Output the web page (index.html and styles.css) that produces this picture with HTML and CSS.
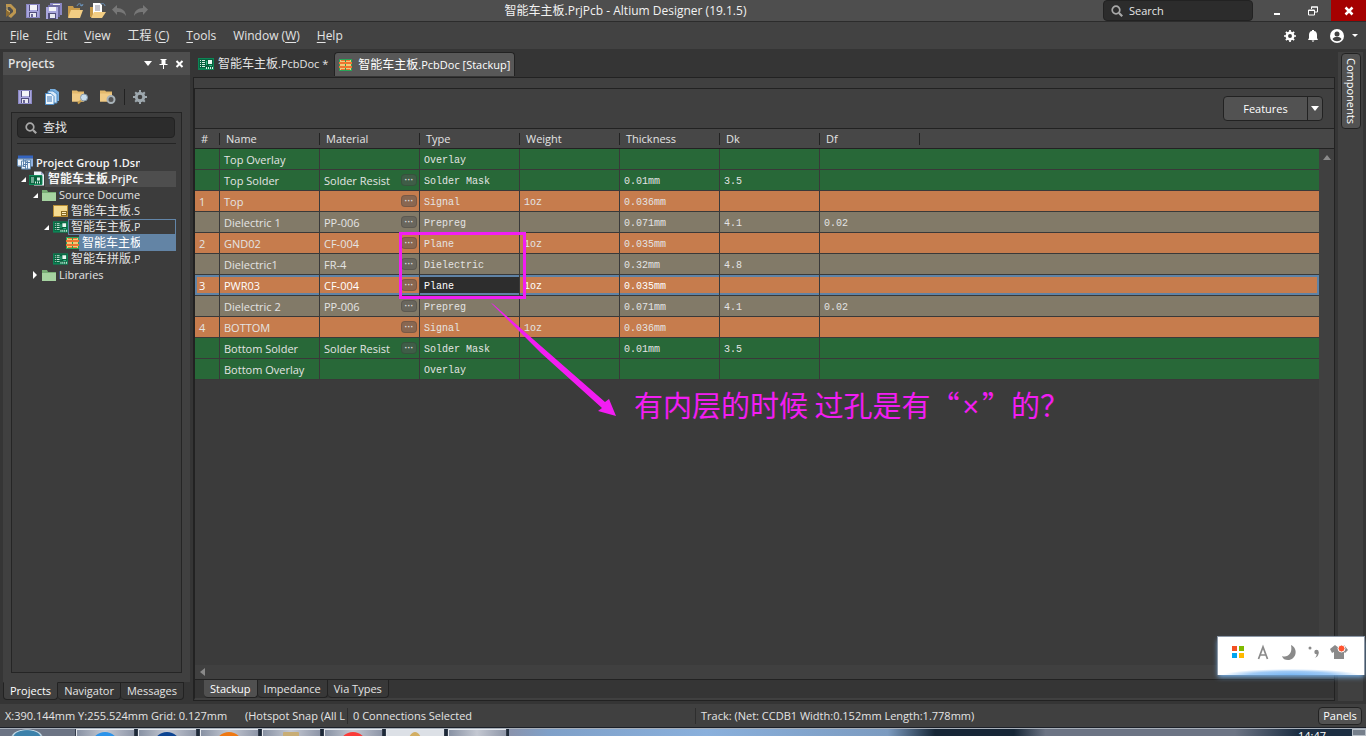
FILE: index.html
```html
<!DOCTYPE html>
<html lang="zh-CN">
<head>
<meta charset="utf-8">
<title>智能车主板.PrjPcb - Altium Designer (19.1.5)</title>
<link rel="stylesheet" href="styles.css">
</head>
<body>
<svg class="defs" width="0" height="0" aria-hidden="true">
  <symbol id="i-save" viewBox="0 0 14 14"><path d="M0 0h14v14H0z" fill="#8b88c4"/><path d="M1 1h12v12H1z" fill="#a9a6dc"/><path d="M3 1h8v5H3z" fill="#f4f4f8"/><path d="M3 1h1v6H3zM11 1h1v6h-1z" fill="#514e7c"/><path d="M3 8h8v5H3z" fill="#514e7c"/><path d="M4 9h6v4H4z" fill="#e8e8f0"/><path d="M5 10h2v3H5z" fill="#6a6796"/></symbol>
  <symbol id="i-saveall" viewBox="0 0 16 16"><path d="M4 0h12v12H4z" fill="#8b88c4"/><path d="M7 1h7v3H7z" fill="#eee"/><path d="M2 2h12v12H2z" fill="#6c69a0"/><path d="M0 4h12v12H0z" fill="#a9a6dc"/><path d="M3 4h7v4H3z" fill="#f4f4f8"/><path d="M2 10h8v6H2z" fill="#514e7c"/><path d="M4 11h5v4H4z" fill="#e8e8f0"/></symbol>
  <symbol id="i-open" viewBox="0 0 16 16"><path d="M0 3h5l1 2h6v9H0z" fill="#c89b4a"/><path d="M3 7h12l-3 8H0z" fill="#f2cd83"/><path d="M9 3c1-3 4-3 5 0m0 0l1-2m-1 2l-2-1" fill="none" stroke="#6c95bd"/></symbol>
  <symbol id="i-opendoc" viewBox="0 0 16 16"><path d="M0 4h11v10H0z" fill="#c89b4a"/><path d="M3 0h7l2 2v9H3z" fill="#fff"/><path d="M5 3h5M5 5h5M5 7h5" stroke="#889"/><path d="M4 9h12l-4 6H1z" fill="#f2cd83"/><path d="M11 1c2-1 4 0 4 2" fill="none" stroke="#6c95bd"/></symbol>
  <symbol id="i-undo" viewBox="0 0 15 12"><path d="M0 4.500L5 0v3c5 0 9 3 9 8-2-3-4-4-9-4v3z" fill="#777"/></symbol>
  <symbol id="i-pcb" viewBox="0 0 16 12"><path d="M0 0h16v12H0z" fill="#0c8455"/><path d="M1 1h14v9H1z" fill="#07623e"/><path d="M2 2h1v1H2zM2 4h1v1H2zM2 6h1v1H2zM2 8h1v1H2zM4 2h3v1H4zM4 4h3v1H4zM4 6h3v1H4zM4 8h3v1H4zM8 9h1v2H8zM10 9h1v2h-1zM12 9h1v2h-1zM14 9h1v2h-1z" fill="#d8efe4"/><path d="M10 2h4v4h-4z" fill="#e9f7f0"/><path d="M8 3h1v4H8zM11 7h3v1h-3z" fill="#36b585"/></symbol>
  <symbol id="i-stack" viewBox="0 0 13 12"><path d="M0 0h13v12H0z" fill="#27a558"/><path d="M1 1h11v10H1z" fill="#f3c978"/><path d="M0 3h13v2H0zM0 7h13v2H0z" fill="#ee7430"/><path d="M2 1h4v1H2zM7 1h4v1H7zM2 10h4v1H2zM7 10h4v1H7z" fill="#ee7430"/><path d="M6 1h1v2H6zM6 9h1v2H6zM6 5h1v2H6z" fill="#2c9e50"/></symbol>
  <symbol id="i-folder" viewBox="0 0 14 12"><path d="M0 1h5l1 2h8v9H0z" fill="#79ad76"/><path d="M1 4h13v8H0V4z" fill="#a6d3a1"/></symbol>
  <symbol id="i-sheet" viewBox="0 0 15 12"><path d="M0 0h15v12H0z" fill="#b88e36"/><path d="M1 1h13v10H1z" fill="#f5dc91"/><path d="M8 6h6v5H8z" fill="#8a6a20"/><path d="M9 7h4v1H9zM9 9h4v1H9z" fill="#fbeec0"/></symbol>
  <symbol id="i-docs" viewBox="0 0 14 16"><path d="M5 0h5l4 3v9H5z" fill="#78aede"/><path d="M3 2h5l4 3v9H3z" fill="#d8e9f8" stroke="#4d8cc6"/><path d="M.5 4.500H6l3 3v8H.500z" fill="#eef6fd" stroke="#4d8cc6"/><path d="M2 8h5M2 10h5M2 12h5" stroke="#3c77b5"/></symbol>
  <symbol id="i-fsearch" viewBox="0 0 16 15"><path d="M0 1h5l1 1h6v10H0z" fill="#e3b96d"/><path d="M0 4h12v8H0z" fill="#f0cb86"/><circle cx="12" cy="8" r="3.500" fill="#c7dcec" stroke="#8598a8"/><path d="M9 11l-3 3" stroke="#caa04c" stroke-width="2"/></symbol>
  <symbol id="i-fgear" viewBox="0 0 16 15"><path d="M0 1h5l1 1h6v10H0z" fill="#e3b96d"/><path d="M0 4h12v8H0z" fill="#f0cb86"/><circle cx="11" cy="10" r="3.500" fill="#555" stroke="#a8b2b8" stroke-width="2"/></symbol>
  <symbol id="i-gear" viewBox="0 0 14 14"><g stroke="currentColor" stroke-width="3"><path d="M7 0v14M0 7h14M2.200 2.200l9.600 9.600M11.800 2.200L2.200 11.800" stroke-width="2"/></g><circle cx="7" cy="7" r="5.200" fill="currentColor"/><circle cx="7" cy="7" r="2.300" fill="#404040"/></symbol>
  <symbol id="i-search" viewBox="0 0 12 12"><circle cx="5" cy="5" r="3.800" fill="none" stroke="currentColor" stroke-width="1.700"/><path d="M8 8l3.200 3.200" stroke="currentColor" stroke-width="2.200"/></symbol>
  <symbol id="i-group" viewBox="0 0 16 15"><path d="M1 0h15v3H1z" fill="#3464c0"/><path d="M1 3h15v8H1z" fill="#8fb0e0"/><path d="M.500 3.500h6v7h-6zM4.500 5.500h6v8h-6zM8.500 4.500h5v9h-5z" fill="#edf4fc" stroke="#6288ae"/><path d="M6 9h4M6 11h3M9 7h4" stroke="#557ba8"/></symbol>
  <symbol id="i-prj" viewBox="0 0 16 15"><path d="M5 0h7l3 3v11H5z" fill="#eef1f8"/><path d="M12 0v3h3z" fill="#9aa6c8"/><path d="M0 4h13v9H0z" fill="#07623e" stroke="#15905f"/><path d="M2 6h3v1H2zM2 8h3v1H2zM2 10h3v1H2zM6 10h1v2H6zM8 10h1v2H8zM10 10h1v2h-1zM8 6h3v3H8z" fill="#d9f0e5"/></symbol>
</svg>

<header class="titlebar">
  <div class="quick">
    <svg class="logo" viewBox="0 0 12 16"><path d="M1 1h5l5 5v4l-5 5-3-2 5-4V7L5 4H1z" fill="#bd9750"/><path d="M1 6l4 2v3l-4 3z" fill="#8f6d32"/><path d="M2 4v3l3 2" fill="none" stroke="#e0c078"/></svg>
    <button aria-label="Save"><svg class="s14"><use href="#i-save"/></svg></button>
    <button aria-label="Save all"><svg class="s16"><use href="#i-saveall"/></svg></button>
    <button aria-label="Open"><svg class="s16"><use href="#i-open"/></svg></button>
    <button aria-label="Open document"><svg class="s16"><use href="#i-opendoc"/></svg></button>
    <button aria-label="Undo"><svg class="undo"><use href="#i-undo"/></svg></button>
    <button aria-label="Redo"><svg class="undo flip"><use href="#i-undo"/></svg></button>
  </div>
  <h1 class="title">智能车主板.PrjPcb - Altium Designer (19.1.5)</h1>
  <div class="winctl">
    <label class="search top-search"><svg class="s12"><use href="#i-search"/></svg><input type="text" placeholder="Search" aria-label="Search"></label>
    <button class="wbtn" aria-label="Minimize"><svg class="s10" viewBox="0 0 10 10"><path d="M2 7h6v2H2z" fill="#fff"/></svg></button>
    <button class="wbtn" aria-label="Restore"><svg class="s10" viewBox="0 0 10 10"><path d="M3.500 3V1h6v5H7M3 1h7M.500 4h6v5h-6zM0 4.500h7" fill="none" stroke="#fff"/></svg></button>
    <button class="wbtn close" aria-label="Close"><svg class="s10" viewBox="0 0 10 10"><path d="M1.500 1.500l7 7M8.500 1.500l-7 7" stroke="#fff" stroke-width="2.500"/></svg></button>
  </div>
</header>

<nav class="menubar">
  <div class="menus">
    <button><span><u>F</u>ile</span></button><button><span><u>E</u>dit</span></button><button><span><u>V</u>iew</span></button><button><span>工程 (<u>C</u>)</span></button><button><span><u>T</u>ools</span></button><button><span>Window (<u>W</u>)</span></button><button><span><u>H</u>elp</span></button>
  </div>
  <div class="account">
    <button aria-label="Settings"><svg class="s12"><use href="#i-gear"/></svg></button>
    <button aria-label="Notifications"><svg class="s12" viewBox="0 0 12 12"><path d="M5 0h2v1c2 0 3 2 3 4v3l1 2H1l1-2V5c0-2 1-4 3-4zM4.500 10.500h3L6 12z" fill="#fff"/></svg></button>
    <button aria-label="Account"><svg class="s14" viewBox="0 0 14 14"><circle cx="7" cy="7" r="7" fill="#fff"/><circle cx="7" cy="5" r="2.500" fill="#404040"/><path d="M2.500 10c2-3 7-3 9 0-2 3-7 3-9 0z" fill="#404040"/></svg></button>
    <i class="tri small"></i>
  </div>
</nav>

<main class="work">
  <aside class="projects">
    <div class="panel-head"><h2>Projects</h2><button aria-label="Panel menu"><i class="tri"></i></button><button aria-label="Pin"><svg class="pin" viewBox="0 0 8 10"><path d="M1 0h6v1H6v4h2v1H4.500v4h-1V6H0V5h2V1H1z" fill="#fff"/></svg></button><button aria-label="Close panel"><svg class="pin" viewBox="0 0 8 10"><path d="M1 2l6 6M7 2L1 8" stroke="#fff" stroke-width="2"/></svg></button></div>
    <div class="panel-body">
      <div class="tools">
        <button aria-label="Save"><svg class="s14"><use href="#i-save"/></svg></button>
        <button aria-label="Documents"><svg class="s16"><use href="#i-docs"/></svg></button>
        <button aria-label="Find in project"><svg class="s16"><use href="#i-fsearch"/></svg></button>
        <button aria-label="Project options"><svg class="s16"><use href="#i-fgear"/></svg></button>
        <span class="vsep"></span>
        <button class="gray" aria-label="Settings"><svg class="s14"><use href="#i-gear"/></svg></button>
      </div>
      <div class="treebox">
        <label class="search tree-search"><svg class="s12"><use href="#i-search"/></svg><input type="text" placeholder="查找" aria-label="查找"></label>
        <ul class="tree">
          <li class="b"><svg class="s16"><use href="#i-group"/></svg><span>Project Group 1.Dsn'</span></li>
          <li class="b l1 cur"><i class="exp"></i><svg class="s16"><use href="#i-prj"/></svg><span><b class="cjk">智能车主板</b>.PrjPc</span></li>
          <li class="l2"><i class="exp"></i><svg class="i14"><use href="#i-folder"/></svg><span>Source Docume</span></li>
          <li class="l3"><svg class="i15"><use href="#i-sheet"/></svg><span><b class="cjk">智能车主板</b>.S</span></li>
          <li class="l3 box"><i class="exp"></i><svg class="i15"><use href="#i-pcb"/></svg><span><b class="cjk">智能车主板</b>.P</span></li>
          <li class="l4 sel"><svg class="i13"><use href="#i-stack"/></svg><span><b class="cjk">智能车主板</b></span></li>
          <li class="l3"><svg class="i15"><use href="#i-pcb"/></svg><span><b class="cjk">智能车拼版</b>.P</span></li>
          <li class="l2"><i class="exp shut"></i><svg class="i14"><use href="#i-folder"/></svg><span>Libraries</span></li>
        </ul>
      </div>
    </div>
    <div class="tabs ptabs"><button class="on">Projects</button><button>Navigator</button><button>Messages</button></div>
  </aside>

  <section class="doc">
    <div class="doctabs">
      <button><svg class="i16"><use href="#i-pcb"/></svg><span><b class="cjk">智能车主板</b>.PcbDoc *</span></button>
      <button class="on"><svg class="i13"><use href="#i-stack"/></svg><span><b class="cjk">智能车主板</b>.PcbDoc [Stackup]</span></button>
    </div>
    <div class="frame">
      <div class="strip"></div>
      <div class="featbar"><div class="split"><button>Features</button><button class="drop" aria-label="More features"><i class="tri"></i></button></div></div>
      <div class="canvas">
        <table>
          <colgroup><col class="c0"><col class="c"><col class="c"><col class="c"><col class="c"><col class="c"><col class="c"><col class="c"><col><col class="sb"></colgroup>
          <thead><tr><th>#</th><th>Name</th><th>Material</th><th>Type</th><th>Weight</th><th>Thickness</th><th>Dk</th><th>Df</th><th class="end" colspan="2"></th></tr></thead>
          <tbody>
            <tr class="g"><td></td><td>Top Overlay</td><td></td><td>Overlay</td><td></td><td></td><td></td><td colspan="2"></td><td class="rail" rowspan="11"><i class="tri up"></i></td></tr>
            <tr class="g"><td></td><td>Top Solder</td><td><div class="mat">Solder Resist<button aria-label="Choose material">···</button></div></td><td>Solder Mask</td><td></td><td>0.01mm</td><td>3.5</td><td colspan="2"></td></tr>
            <tr class="o"><td>1</td><td>Top</td><td><div class="mat"><button aria-label="Choose material">···</button></div></td><td>Signal</td><td>1oz</td><td>0.036mm</td><td></td><td colspan="2"></td></tr>
            <tr class="d"><td></td><td>Dielectric 1</td><td><div class="mat">PP-006<button aria-label="Choose material">···</button></div></td><td>Prepreg</td><td></td><td>0.071mm</td><td>4.1</td><td colspan="2">0.02</td></tr>
            <tr class="o"><td>2</td><td>GND02</td><td><div class="mat">CF-004<button aria-label="Choose material">···</button></div></td><td>Plane</td><td>1oz</td><td>0.035mm</td><td></td><td colspan="2"></td></tr>
            <tr class="d"><td></td><td>Dielectric1</td><td><div class="mat">FR-4<button aria-label="Choose material">···</button></div></td><td>Dielectric</td><td></td><td>0.32mm</td><td>4.8</td><td colspan="2"></td></tr>
            <tr class="o picked"><td>3</td><td>PWR03</td><td><div class="mat">CF-004<button aria-label="Choose material">···</button></div></td><td class="edit">Plane</td><td>1oz</td><td>0.035mm</td><td></td><td class="last" colspan="2"></td></tr>
            <tr class="d"><td></td><td>Dielectric 2</td><td><div class="mat">PP-006<button aria-label="Choose material">···</button></div></td><td>Prepreg</td><td></td><td>0.071mm</td><td>4.1</td><td colspan="2">0.02</td></tr>
            <tr class="o"><td>4</td><td>BOTTOM</td><td><div class="mat"><button aria-label="Choose material">···</button></div></td><td>Signal</td><td>1oz</td><td>0.036mm</td><td></td><td colspan="2"></td></tr>
            <tr class="g"><td></td><td>Bottom Solder</td><td><div class="mat">Solder Resist<button aria-label="Choose material">···</button></div></td><td>Solder Mask</td><td></td><td>0.01mm</td><td>3.5</td><td colspan="2"></td></tr>
            <tr class="g"><td></td><td>Bottom Overlay</td><td></td><td>Overlay</td><td></td><td></td><td></td><td colspan="2"></td></tr>
          </tbody>
        </table>
        <div class="rest"><div class="rail"></div></div>
        <div class="markbox"></div>
        <svg class="arrow" viewBox="0 0 126 114"><path d="M0 0l2 1 112 98 4-3 7 17-18-5 4-3L50 50z" fill="#f21df2"/></svg>
        <p class="note">有内层的时候 过孔是有“<span class="times">×</span>”的？</p>
      </div>
      <div class="hscroll"><i class="tri left"></i></div>
      <div class="tabs dtabs"><button class="on">Stackup</button><button>Impedance</button><button>Via Types</button></div>
    </div>
  </section>

  <aside class="side"><button>Components</button></aside>
</main>

<footer class="status">
  <span class="xy">X:390.144mm Y:255.524mm</span><span class="grid">Grid: 0.127mm</span><span class="snap">(Hotspot Snap (All L</span><span class="conn">0 Connections Selected</span><span class="track">Track: (Net: CCDB1 Width:0.152mm Length:1.778mm)</span><button>Panels</button>
</footer>

<div class="taskbar">
  <span class="start"></span>
  <span class="task"><i class="blue"></i></span><span class="task"><i class="navy"></i></span><span class="task gap"><i class="orange"></i></span><span class="task"><i class="tan"></i></span><span class="task"><i class="red"></i></span><span class="task lit"><i class="gold"></i></span><span class="task"></span>
  <span class="glass"></span><span class="clock">14:47</span><span class="desk"></span>
</div>

<div class="ime">
  <svg viewBox="0 0 122 20">
    <path d="M0 3h5v5H0z" fill="#f25022"/><path d="M7 3h5v5H7z" fill="#7fba00"/><path d="M0 10h5v5H0z" fill="#00a4ef"/><path d="M7 10h5v5H7z" fill="#ffb900"/>
    <path d="M26.500 16L31 4l4.500 12M28 12h6" fill="none" stroke="#8a8a8a" stroke-width="1.700"/>
    <path d="M59 2c8 4 5 15-3 15-3 0-5-1-6-4 5 2 11-2 9-11z" fill="#8a8a8a"/>
    <circle cx="78" cy="5" r="1.500" fill="#8a8a8a"/><circle cx="84.500" cy="9" r="2.200" fill="#8a8a8a"/><path d="M86.700 9c0 4-2 5-4 6 2-2 2-3 2-5z" fill="#8a8a8a"/>
    <path d="M98 6l5-4 4 3 5-3 4 5-3 3-1-1v7h-10v-7l-2 1z" fill="#8a8a8a"/><circle cx="109.500" cy="5.500" r="3.500" fill="#ff5430" stroke="#fff"/>
  </svg>
</div>
</body>
</html>
```

FILE: styles.css
```css
* { box-sizing: border-box; }
html { background: #353535; }
body {
  margin: 0; min-height: 100vh; position: relative;
  display: flex; flex-direction: column; overflow: hidden;
  font: 11px/16px "Open Sans", "Noto Sans CJK SC", sans-serif;
  color: #e4e4e4; background: #353535;
}
button, input { font: inherit; color: inherit; background: none; border: 0; padding: 0; margin: 0; }
button { display: flex; align-items: center; justify-content: center; white-space: nowrap; }
svg { display: block; flex: none; }
h1, h2, p, ul { margin: 0; padding: 0; font-size: inherit; font-weight: normal; list-style: none; }
.defs { position: absolute; }
.cjk { font-size: 12px; font-weight: inherit; line-height: 1; }
.s10 { width: 10px; height: 10px; }
.s12 { width: 12px; height: 12px; }
.s14 { width: 14px; height: 14px; }
.s16 { width: 16px; height: 16px; }
.i13 { width: 13px; height: 12px; }
.i14 { width: 14px; height: 12px; }
.i15 { width: 15px; height: 12px; }
.i16 { width: 16px; height: 12px; }
.tri { width: 0; border: 4px solid transparent; border-top: 5px solid #fff; border-bottom: 0; }
.tri.small { border-width: 3px 3px 0; }
.tri.up { display: block; margin: 0 auto; border: 4px solid transparent; border-bottom: 5px solid #8a8a8a; border-top: 0; }
.tri.left { border: 4px solid transparent; border-right: 5px solid #8a8a8a; border-left: 0; }

.titlebar { display: flex; align-items: center; height: 22px; background: #4e4e4e; border-bottom: 1px solid #2c2c2c; }
.quick { display: flex; align-items: center; gap: 6px; padding-left: 5px; }
.logo { width: 12px; height: 16px; margin-right: 3px; }
.undo { width: 15px; height: 12px; }
.flip { transform: scaleX(-1); }
.title { flex: 1; text-align: center; font-size: 12px; color: #f2f2f2; }
.winctl { display: flex; height: 21px; }
.search { display: flex; align-items: center; gap: 6px; padding: 0 7px; background: #2c2c2c; border: 1px solid #222; border-radius: 4px; color: #a8a8a8; }
.search input { flex: 1; min-width: 0; color: #e6e6e6; outline: 0; }
.search input::placeholder { color: #e6e6e6; opacity: 1; }
.top-search { width: 150px; margin-right: 6px; }
.wbtn { width: 36px; height: 21px; }
.close { width: 35px; background: #a50000; }

.menubar { display: flex; justify-content: space-between; align-items: center; height: 27px; padding: 0 8px 0 10px; background: #424242; font-size: 12px; }
.menus { display: flex; gap: 17px; }
.menus u { text-underline-offset: 2px; }
.account { display: flex; align-items: center; gap: 11px; color: #fff; }
.account .tri { margin-left: -3px; }

.work { flex: 1; display: flex; padding: 3px; }
.projects { width: 187px; display: flex; flex-direction: column; }
.panel-head { display: flex; align-items: center; gap: 7px; height: 23px; padding: 0 6px 0 5px; background: #4e4e4e; }
.panel-head h2 { flex: 1; font-weight: 600; font-size: 12px; }
.pin { width: 9px; height: 10px; }
.panel-body { flex: 1; display: flex; flex-direction: column; padding: 0 8px 9px; background: #404040; }
.tools { display: flex; align-items: center; gap: 12px; height: 37px; padding: 6px 7px 0; }
.gray { color: #9da7ad; }
.vsep { width: 1px; height: 16px; background: #222; margin: 0 -4px; }
.treebox { flex: 1; padding: 4px 5px; background: #3c3c3c; border: 1px solid #252525; }
.tree-search { height: 21px; margin-right: 1px; font-size: 12px; }
.tree { margin-top: 5px; padding-top: 11px; border-top: 1px solid #252525; }
.tree li { display: flex; align-items: center; height: 16px; position: relative; }
.tree li span { flex: 1; min-width: 0; height: 16px; padding: 0 36px 0 3px; white-space: nowrap; overflow: clip; overflow-clip-margin: content-box; }
.tree .b { font-weight: 600; color: #f4f4f4; }
.tree .l1 { padding-left: 12px; }
.tree .l2 { padding-left: 25px; }
.tree .l3 { padding-left: 36px; }
.tree .l4 { padding-left: 49px; }
.tree .cur span { background: #4e4e4e; }
.tree .box span { outline: 1px solid #6285a8; outline-offset: -1px; }
.tree .sel span { background: #6384a5; color: #fff; }
.tree .exp { position: absolute; margin-left: -9px; border-left: 5px solid transparent; border-bottom: 5px solid #fff; }
.tree .l1 .exp { margin-left: -8px; }
.tree .exp.shut { border: 4px solid transparent; border-left: 4px solid #fff; border-right: 0; }

.tabs { display: flex; }
.tabs button { height: 19px; padding: 0 6px; background: #383838; border: 1px solid #222; border-left: 0; border-radius: 0 0 4px 4px; }
.tabs .on { color: #fff; }
.ptabs button { height: 18px; }
.ptabs { height: 19px; }
.ptabs button.on { background: #404040; border-top-color: #404040; border-left: 1px solid #222; }

.doc { flex: 1; min-width: 0; margin-left: 3px; display: flex; flex-direction: column; }
.doctabs { display: flex; height: 25px; padding-left: 5px; }
.doctabs button { gap: 4px; padding: 0 6px 0 0; height: 24px; }
.doctabs .on { gap: 6px; padding: 0 4px; background: #585858; border: 1px solid #222; border-bottom: 0; border-radius: 4px 4px 0 0; color: #fff; }
.frame { flex: 1; display: flex; flex-direction: column; border: 1px solid #222; background: #404040; }
.strip { height: 11px; border-bottom: 1px solid #222; }
.featbar { display: flex; justify-content: flex-end; align-items: center; height: 39px; padding-right: 11px; border-left: 1px solid #222; }
.split { display: flex; height: 25px; background: #525252; border: 1px solid #222; border-radius: 4px; color: #fff; }
.split button { width: 83px; }
.split .drop { width: 15px; border-left: 1px solid #222; }

.canvas { flex: 1; position: relative; display: flex; flex-direction: column; background: #3b3b3b; border-left: 1px solid #222; }
table { width: 100%; table-layout: fixed; border-collapse: separate; border-spacing: 0; }
.c0 { width: 25px; }
.c { width: 100px; }
.sb { width: 15px; }
th { height: 21px; padding: 0 6px; text-align: left; font-weight: normal; line-height: 18px;
  background: linear-gradient(#222, #222) right center / 1px 12px no-repeat #474747;
  border-top: 1px solid #222; border-bottom: 1px solid #222; }
th.end { background: #474747; }
td { height: 21px; padding: 2px 4px 0; line-height: 18px; vertical-align: top; border-right: 1px solid #393939; border-bottom: 1px solid #393939; white-space: nowrap; }
td:nth-child(n+4) { padding-top: 4px; font: 10px/16px "Liberation Mono", monospace; }
td[colspan] { border-right: 0; }
.g { background: #286838; }
.o { background: #c67c4d; }
.d { background: #827a68; }
.rail { background: #404040; }
td.rail { width: 15px; padding: 6px 0 0; border: 0; }
.mat { display: flex; align-items: center; height: 18px; }
.mat button { margin: 0 -2px 2px auto; width: 16px; height: 12px; border-radius: 4px; border: 1px solid #0002; background: #5558; color: #ddd; font: bold 9px/10px "Liberation Sans", sans-serif; }
.picked { color: #fff; }
.picked td { box-shadow: inset 0 2px #5f83a6, inset 0 -2px #5f83a6; }
.picked td:first-child { box-shadow: inset 0 2px #5f83a6, inset 0 -2px #5f83a6, inset 2px 0 #5f83a6; }
.picked .last { box-shadow: inset 0 2px #5f83a6, inset 0 -2px #5f83a6, inset -2px 0 #5f83a6; }
.picked .edit { background: #2d2d2d; }
.rest { flex: 1; display: flex; justify-content: flex-end; }
.rest .rail { width: 15px; }
.markbox { position: absolute; left: 204px; top: 104px; width: 127px; height: 67px; border: 3px solid #f21df2; }
.arrow { position: absolute; left: 296px; top: 175px; width: 126px; height: 114px; }
.note { position: absolute; left: 439px; top: 255px; font: 29px/42px "Noto Sans CJK SC", sans-serif; color: #f21df2; white-space: nowrap; }
.times { margin: 0 3px; font-family: "Noto Sans", sans-serif; }
.hscroll { display: flex; align-items: center; height: 14px; padding-left: 5px; border-left: 1px solid #222; }
.dtabs { height: 21px; padding-left: 9px; border-top: 1px solid #222; border-left: 1px solid #222; border-bottom: 2px solid #404040; background: #353535; }
.dtabs button { height: 18px; border-top: 0; }
.dtabs .on { background: #505050; }

.side { width: 25px; margin-left: 3px; padding: 1px 2px 0 3px; background: #404040; }
.side button { writing-mode: vertical-rl; width: 20px; height: 76px; background: #525252; border: 1px solid #222; border-radius: 4px; color: #fff; }

.status { display: flex; align-items: center; height: 24px; padding: 0 4px 0 5px; background: #404040; white-space: nowrap; }
.xy { width: 146px; }
.grid { width: 94px; }
.snap { width: 102px; overflow: hidden; }
.conn { width: 348px; padding-left: 5px; border-left: 1px solid #2e2e2e; }
.track { flex: 1; padding-left: 5px; border-left: 1px solid #2e2e2e; }
.status button { width: 44px; height: 18px; background: #525252; border: 1px solid #222; border-radius: 4px; color: #fff; }

.taskbar { display: flex; height: 8px; overflow: hidden; background: #1c2938; border-top: 1px solid #a8b0ba; box-shadow: 0 -1px #1c2028; }
.start { width: 75px; background: radial-gradient(ellipse 16px 8px at 27px 8px, #3c81aa 80%, #c6dce8 90%, #6c7484); }
.task { width: 60px; margin-right: 2px; padding-top: 3px; background: linear-gradient(90deg, #8690a2, #c4c8d2 50%, #8e96a8); border: solid #333b4a; border-width: 0 1px; box-shadow: inset 1px 1px #e4e8ee; }
.task i { display: block; width: 26px; height: 24px; margin: 0 auto; border-radius: 50%; background: #2b93ea; }
.task .navy { background: #0d4593; }
.task .orange { background: #ef7914; }
.task .tan { width: 16px; border-radius: 1px; background: #c8ad75; }
.task .red { background: #fa3b38; }
.task .gold { width: 14px; background: #d2ae62; }
.lit { background: #dce0e6; }
.glass { flex: 1; background: linear-gradient(90deg, #8a93ac, #7fa0c8 5%, #8ab0dc 25%, #7c9bc0 48%, #162636 54%, #162636 64%, #6c7484 68%, #6c7484 92%, #1c2e42); }
.clock { width: 54px; color: #fff; background: #1c2e42; line-height: 14px; }
.desk { width: 14px; background: #76808c; border: 1px solid #b8c0c8; }

.ime { position: absolute; right: 1px; bottom: 61px; width: 148px; height: 39px; padding: 6px 11px 0 14px; background: radial-gradient(ellipse 68px 6px at 50% 100%, #77b5f2, #9fcaf6 60%, #fff 100%) #fff; border: 1px solid #8d99a8; border-bottom: 0; box-shadow: 0 3px 5px -1px #79b4ee; }
.ime svg { width: 122px; height: 20px; }
```
